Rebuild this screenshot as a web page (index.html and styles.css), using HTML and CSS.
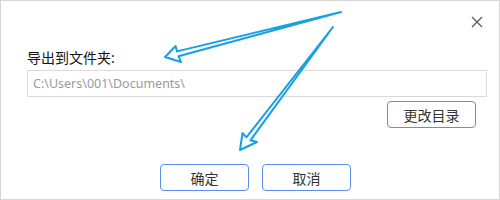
FILE: index.html
```html
<!DOCTYPE html>
<html lang="zh-CN">
<head>
    <meta charset="UTF-8">
    <title>导出</title>
    <link rel="stylesheet" href="styles.css">
</head>
<body>
    <div class="dialog">
        <div class="titlebar">
            <button class="close-btn" aria-label="关闭">
                <svg width="12" height="12" viewBox="0 0 12 12">
                    <path d="M1 1 L11 11 M11 1 L1 11" stroke="#555" stroke-width="1.2" fill="none"/>
                </svg>
            </button>
        </div>

        <div class="content">
            <div class="label">导出到文件夹:</div>
            <div class="path-box">C:\Users\001\Documents\</div>
            <div class="row-right">
                <button class="btn">更改目录</button>
            </div>
        </div>

        <div class="footer">
            <button class="btn">确定</button>
            <button class="btn">取消</button>
        </div>

        <!-- annotation arrows drawn over the dialog -->
        <svg class="arrows" width="500" height="200" viewBox="0 0 500 200">
            <polygon points="341,12 177,51.4 175.6,46 165,57 181,62 178.5,56.2"
                     fill="none" stroke="#17a0e2" stroke-width="2" stroke-linejoin="round"/>
            <polygon points="333,27 246.4,137.3 242.5,133 240,150 257,142 250.4,140.3"
                     fill="none" stroke="#17a0e2" stroke-width="2" stroke-linejoin="round"/>
        </svg>
    </div>
</body>
</html>
```

FILE: styles.css
```css
* {
    margin: 0;
    padding: 0;
    box-sizing: border-box;
}

body {
    background: #fff;
    font-family: "Noto Sans", "Noto Sans CJK SC", sans-serif;
}

.dialog {
    position: relative;
    width: 500px;
    height: 200px;
    border: 1px solid #d6d6d6;
    background: #fff;
    display: flex;
    flex-direction: column;
}

.titlebar {
    height: 41px;
    display: flex;
    justify-content: flex-end;
    align-items: center;
    padding-right: 15px;
}

.close-btn {
    width: 14px;
    height: 14px;
    border: none;
    background: none;
    display: flex;
    align-items: center;
    justify-content: center;
    cursor: pointer;
}

.content {
    padding: 0 12px 0 26px;
}

.label {
    font-size: 14px;
    line-height: 20px;
    color: #111;
    margin-top: 6px;
}

.path-box {
    margin-top: 2px;
    height: 27px;
    border: 1px solid #d9d9d9;
    padding: 0 5px;
    font-size: 12.5px;
    line-height: 25px;
    color: #9a9a9a;
}

.row-right {
    display: flex;
    justify-content: flex-end;
    margin-top: 4px;
    padding-right: 11px;
}

.btn {
    width: 89px;
    height: 27px;
    border: 1px solid #5b8ef2;
    border-radius: 4px;
    background: #fff;
    font-family: "Noto Sans CJK SC", sans-serif;
    font-size: 14px;
    color: #333;
    cursor: pointer;
}

.footer {
    margin-top: 36px;
    display: flex;
    justify-content: center;
    gap: 13px;
    padding-left: 11px;
}

.arrows {
    position: absolute;
    left: -1px;
    top: -1px;
    pointer-events: none;
}
```
